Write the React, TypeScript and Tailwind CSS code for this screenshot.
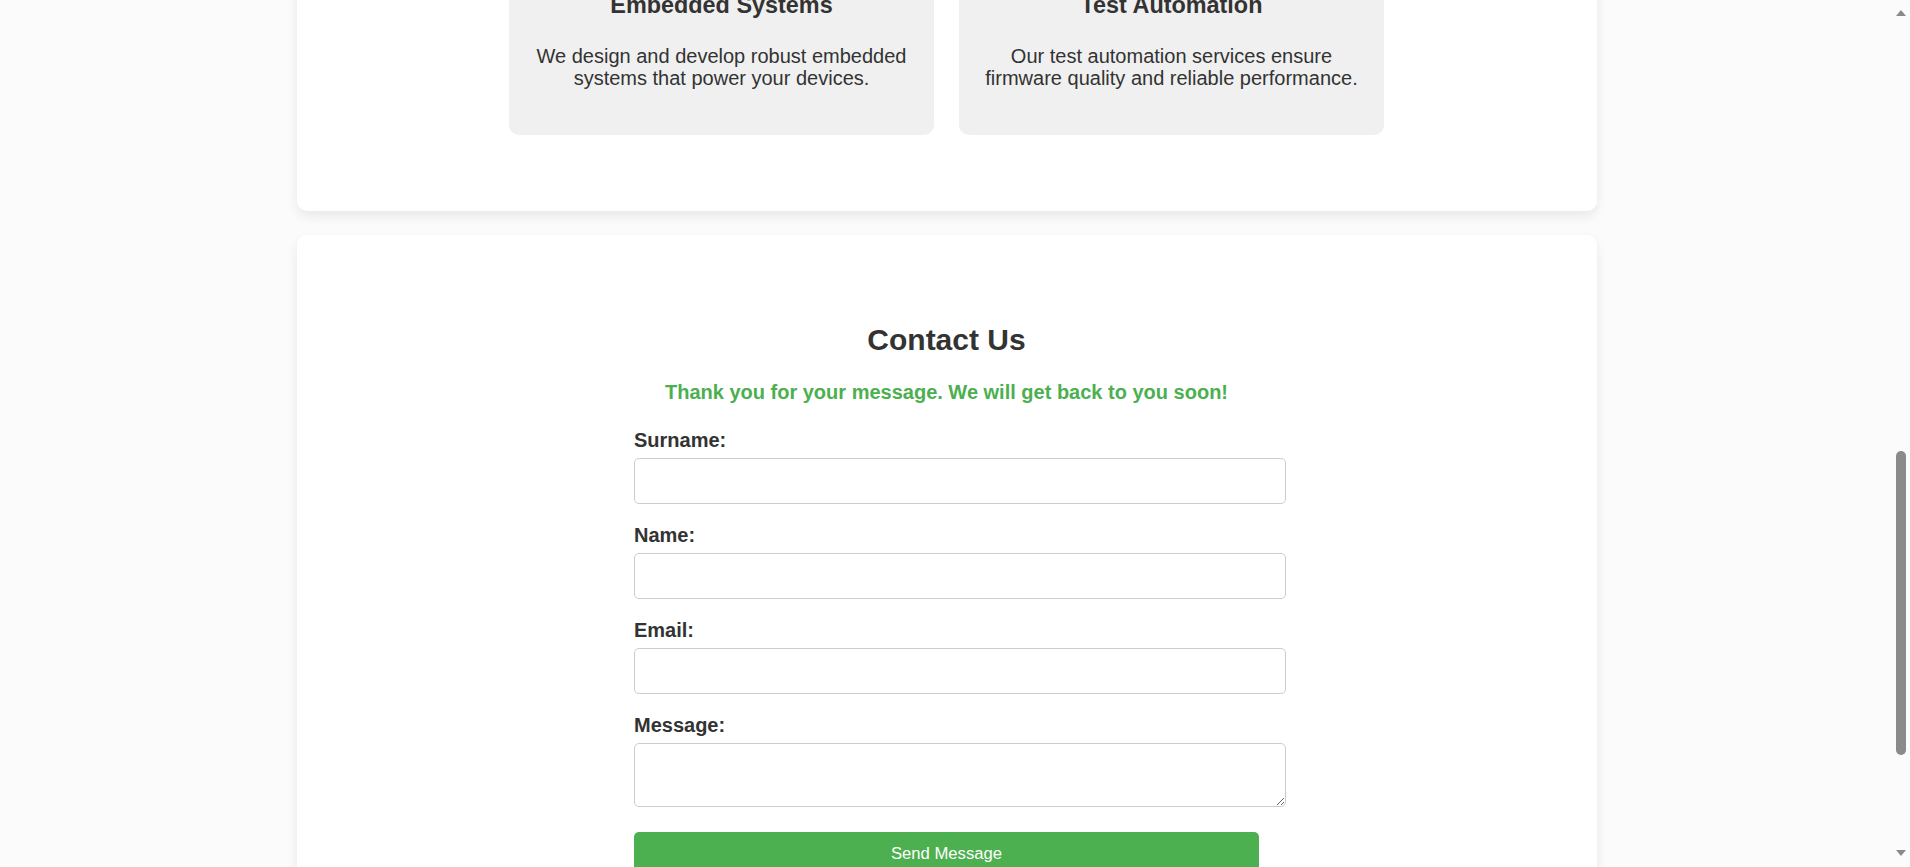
import React from "react";

function ServiceBox({ title, lines }: { title: string; lines: string[] }) {
  return (
    <div className="w-[425px] bg-[#f0f0f0] rounded-[10px] px-[25px] pt-[25px] pb-[46px] text-center text-[#333]">
      <h3 className="text-[23.4px] font-bold leading-[27px] mb-[26px]">{title}</h3>
      <p className="text-[20px] leading-[22px]">
        {lines.map((l, i) => (
          <React.Fragment key={i}>
            {l}
            {i < lines.length - 1 && <br />}
          </React.Fragment>
        ))}
      </p>
    </div>
  );
}

function Field({ label, first, area }: { label: string; first?: boolean; area?: boolean }) {
  return (
    <div className={first ? "mt-[25px]" : "mt-[20px]"}>
      <label className="block text-[20px] leading-[23px] font-bold text-[#333]">{label}</label>
      {area ? (
        <textarea className="block mt-[6px] w-[652px] h-[64px] border border-[#cccccc] rounded-[5px] bg-white outline-none" />
      ) : (
        <input
          type="text"
          className="block mt-[6px] w-[652px] h-[46px] border border-[#cccccc] rounded-[5px] bg-white outline-none"
        />
      )}
    </div>
  );
}

function Scrollbar() {
  return (
    <div className="relative w-[17px] h-full bg-[#fbfbfb] shrink-0">
      <div className="absolute left-[3px] top-[10px] w-0 h-0 border-l-[5px] border-r-[5px] border-b-[6px] border-l-transparent border-r-transparent border-b-[#8a8a8a]" />
      <div className="absolute left-[3px] top-[451px] w-[10px] h-[304px] rounded-full bg-[#8a8a8a]" />
      <div className="absolute left-[3px] top-[850px] w-0 h-0 border-l-[5px] border-r-[5px] border-t-[6px] border-l-transparent border-r-transparent border-t-[#8a8a8a]" />
    </div>
  );
}

export default function App() {
  return (
    <div className="h-[867px] w-full overflow-hidden bg-[#fbfbfb] flex font-['Liberation_Sans',Arial,sans-serif]">
      <div className="flex-1 min-w-0 overflow-hidden">
        <div className="max-w-[1300px] mx-auto">
          <section className="-mt-[96px] bg-white rounded-[10px] shadow-[0_5px_12px_rgba(0,0,0,0.08)] pt-[62.5px] pb-[76px]">
            <div className="flex justify-center gap-[25px]">
              <ServiceBox
                title="Embedded Systems"
                lines={["We design and develop robust embedded", "systems that power your devices."]}
              />
              <ServiceBox
                title="Test Automation"
                lines={["Our test automation services ensure", "firmware quality and reliable performance."]}
              />
            </div>
          </section>

          <section className="mt-[24px] bg-white rounded-[10px] shadow-[0_5px_12px_rgba(0,0,0,0.08)] pt-[87px] pb-[60px]">
            <h2 className="text-center text-[30px] leading-[35px] font-bold text-[#333]">Contact Us</h2>
            <p className="mt-[24px] text-center text-[20px] leading-[23px] font-bold text-[#4CAF50]">
              Thank you for your message. We will get back to you soon!
            </p>
            <form className="w-[625px] mx-auto" onSubmit={(e) => e.preventDefault()}>
              <Field label="Surname:" first />
              <Field label="Name:" />
              <Field label="Email:" />
              <Field label="Message:" area />
              <button
                type="submit"
                className="mt-[25px] w-[625px] h-[44px] bg-[#4CAF50] text-white text-[16.67px] rounded-[5px] font-['Liberation_Sans',Arial,sans-serif]"
              >
                Send Message
              </button>
            </form>
          </section>
        </div>
      </div>
      <Scrollbar />
    </div>
  );
}
